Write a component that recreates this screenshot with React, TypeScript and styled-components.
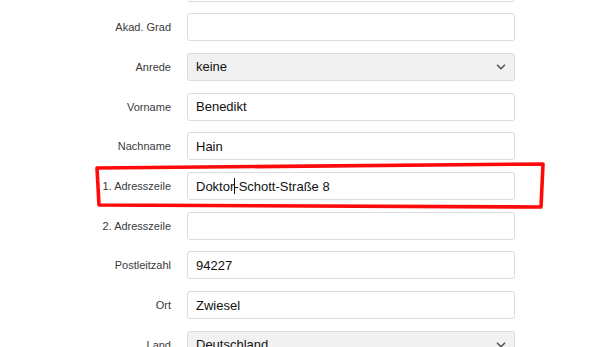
import styled, { createGlobalStyle } from "styled-components";

type Field = {
  label: string;
  value?: string;
  select?: boolean;
  caretAt?: number;
};

const fields: Field[] = [
  { label: "" },
  { label: "Akad. Grad" },
  { label: "Anrede", value: "keine", select: true },
  { label: "Vorname", value: "Benedikt" },
  { label: "Nachname", value: "Hain" },
  { label: "1. Adresszeile", value: "Doktor-Schott-Straße 8", caretAt: 6 },
  { label: "2. Adresszeile" },
  { label: "Postleitzahl", value: "94227" },
  { label: "Ort", value: "Zwiesel" },
  { label: "Land", value: "Deutschland", select: true },
];

function App() {
  return (
    <>
      <GlobalStyle />
      <Page>
        <Form>
          {fields.map((f, i) => (
            <Row key={i}>
              <Label>{f.label}</Label>
              <Box $select={f.select}>
                {f.caretAt !== undefined && f.value ? (
                  <>
                    {f.value.slice(0, f.caretAt)}
                    <Caret />
                    {f.value.slice(f.caretAt)}
                  </>
                ) : (
                  f.value
                )}
                {f.select && (
                  <Chevron viewBox="0 0 10 6" width="10" height="6">
                    <path
                      d="M1.5 1.2l3.5 3.5 3.5-3.5"
                      fill="none"
                      stroke="#555"
                      strokeWidth="1.6"
                      strokeLinecap="round"
                      strokeLinejoin="round"
                    />
                  </Chevron>
                )}
              </Box>
            </Row>
          ))}
        </Form>
        <Marker viewBox="0 0 598 347" width="598" height="347">
          <path
            d="M97 168 L543 164 L541 207 L99 205 Z"
            fill="none"
            stroke="#ff0a0a"
            strokeWidth="3.6"
            strokeLinejoin="round"
          />
        </Marker>
      </Page>
    </>
  );
}

export default App;

const GlobalStyle = createGlobalStyle`
  html, body {
    margin: 0;
    background: #fff;
    overflow: hidden;
  }
  body {
    font-family: "Liberation Sans", Helvetica, Arial, sans-serif;
  }
`;

const Page = styled.div`
  position: relative;
  width: 598px;
  height: 347px;
  overflow: hidden;
`;

const Form = styled.div`
  display: flex;
  flex-direction: column;
  gap: 11.7px;
  margin-top: -26.4px;
`;

const Row = styled.div`
  display: grid;
  grid-template-columns: 171px 328px;
  column-gap: 16px;
  align-items: center;
`;

const Label = styled.div`
  text-align: right;
  font-size: 11px;
  color: #3a3a3a;
`;

const Box = styled.div<{ $select?: boolean }>`
  position: relative;
  box-sizing: border-box;
  height: 28px;
  display: flex;
  align-items: center;
  padding: 0 8px;
  border: 1px solid #dcdcdc;
  border-radius: 3px;
  background: ${(p) => (p.$select ? "#f1f1f1" : "#fff")};
  font-size: 13px;
  color: #111;
  white-space: pre;
`;

const Caret = styled.span`
  display: inline-block;
  width: 1px;
  height: 16px;
  background: #111;
  margin-right: -1px;
`;

const Chevron = styled.svg`
  margin-left: auto;
  margin-right: 0;
`;

const Marker = styled.svg`
  position: absolute;
  left: 0;
  top: 0;
  pointer-events: none;
`;
